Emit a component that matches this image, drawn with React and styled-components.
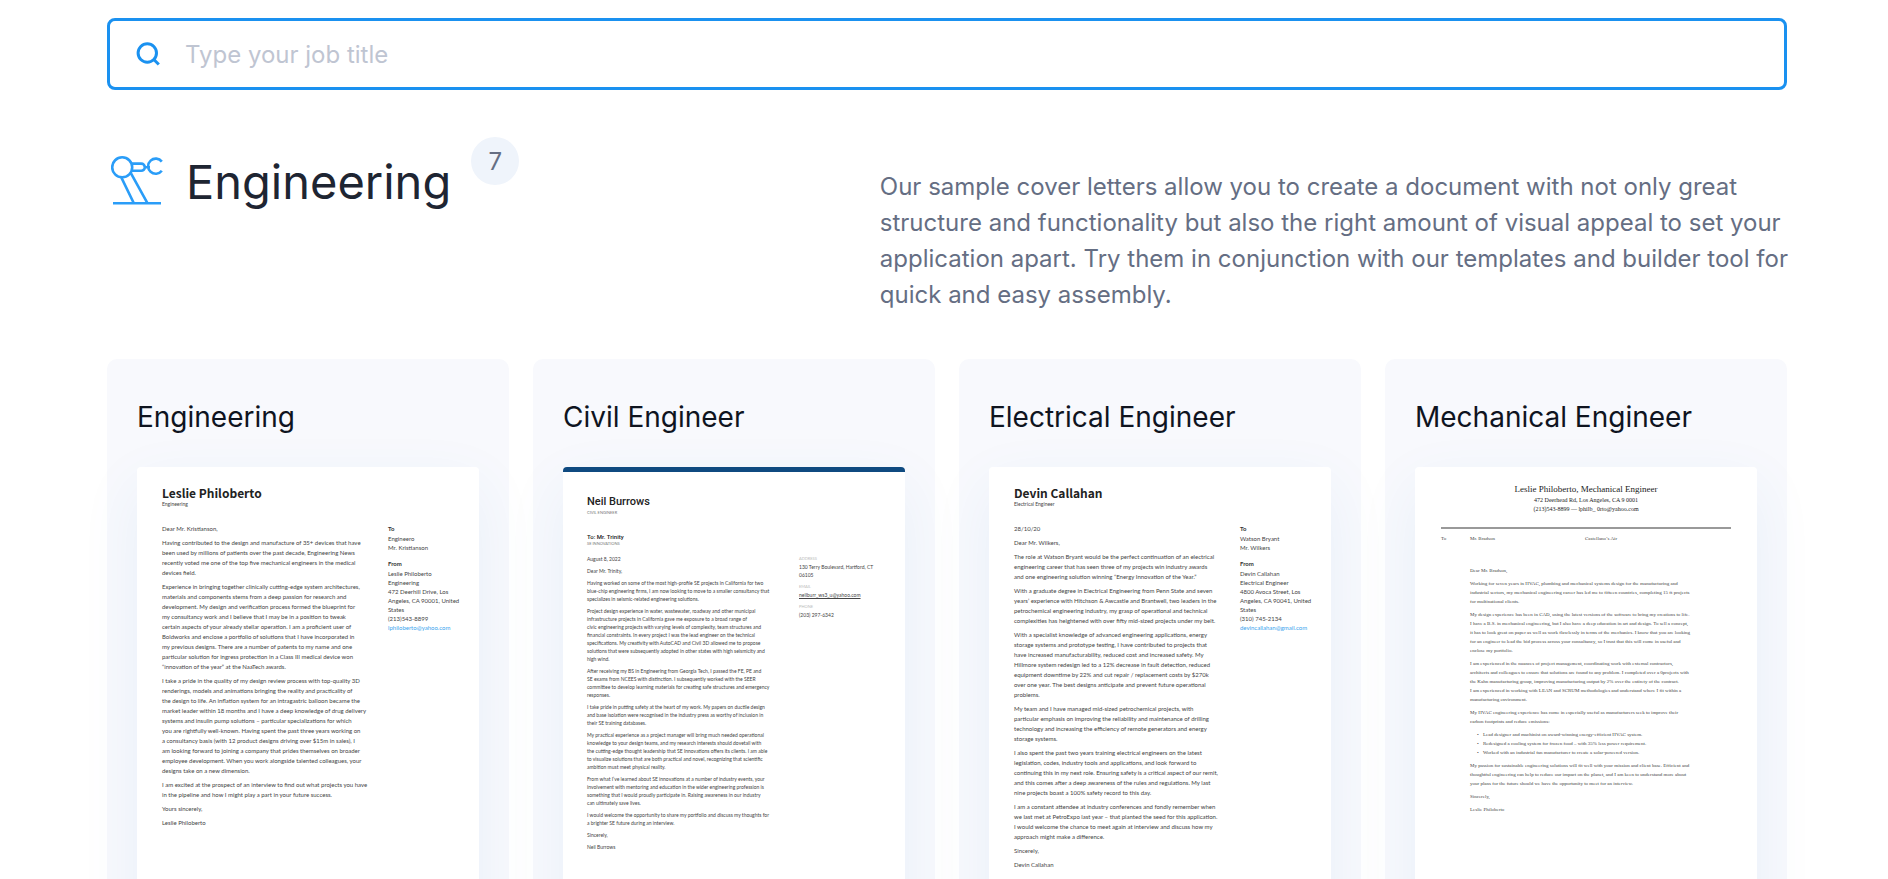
import React from 'react';
import styled, { createGlobalStyle, css } from 'styled-components';

const GlobalStyle = createGlobalStyle`
  *, *::before, *::after { box-sizing: border-box; }
  html { scrollbar-width: none; }
  body {
    margin: 0;
    background: #fff;
    color: #1e2532;
    font-family: Inter, "Liberation Sans", sans-serif;
  }
  h1, h2, h3, p, ul, address { margin: 0; padding: 0; font-weight: 400; font-style: normal; }
  a { color: inherit; text-decoration: none; }
`;

const Page = styled.main`
  padding: 18px 101px 0 107px;
  overflow: hidden;
`;

const SearchBox = styled.label`
  display: flex;
  align-items: center;
  gap: 23px;
  height: 72px;
  padding: 0 26px;
  border: 3px solid #1a91f0;
  border-radius: 8px;
`;

const SearchInput = styled.input`
  flex: 1;
  min-width: 0;
  padding: 2px 0 0;
  border: 0;
  outline: 0;
  background: transparent;
  color: #1e2532;
  font: 400 24px/36px Inter, "Liberation Sans", sans-serif;
  &::placeholder { color: #bfc5d2; opacity: 1; }
`;

const CategoryHeader = styled.header`
  display: flex;
  justify-content: space-between;
  align-items: flex-start;
  margin: 47px 0 46px;
`;

const CategoryTitle = styled.div`
  display: flex;
  align-items: flex-start;
  padding-left: 4px;
`;

const ArmIcon = styled.svg`
  margin-top: 18px;
  flex: none;
`;

const Heading = styled.h1`
  margin: 15px 20px 0 23px;
  font-size: 47px;
  line-height: 60px;
`;

const CountBadge = styled.span`
  width: 48px;
  height: 48px;
  border-radius: 50%;
  background: #eff4fb;
  color: #656e83;
  font-size: 24px;
  line-height: 50px;
  text-align: center;
`;

const Intro = styled.p`
  width: 54%;
  padding-top: 32px;
  color: #656e83;
  font-size: 24px;
  line-height: 36px;
  white-space: pre;
`;

const CardGrid = styled.section`
  display: grid;
  grid-template-columns: repeat(4, minmax(0, 1fr));
  gap: 24px;
`;

const Card = styled.article`
  padding: 40px 30px;
  border-radius: 10px;
  background: #f8f9fd;
`;

const CardTitle = styled.h2`
  margin-bottom: 32px;
  color: #0f141f;
  font-size: 28px;
  line-height: 36px;
`;

const faces = {
  humanist: css`font-family: Lato, sans-serif; font-size: 6px; line-height: 10px;`,
  compact: css`font-family: Lato, sans-serif; font-size: 5px; line-height: 8px;`,
  serif: css`font-family: "Liberation Serif", serif; font-size: 5px; line-height: 9px;`,
};

const Sheet = styled.div`
  aspect-ratio: 342 / 484;
  border-radius: 4px;
  background: #fff;
  color: #444;
  white-space: pre;
  box-shadow: 0 20px 60px rgba(48, 130, 196, 0.08);
  ${(p) => faces[p.$face]}
`;

const PlainSheet = styled(Sheet)`
  padding: 18px 25px;
`;

const BarSheet = styled(Sheet)`
  padding: 22px 24px;
  border-top: 5px solid #0f4a80;
`;

const SerifSheet = styled(Sheet)`
  padding: 15px 26px;
`;

const PlainName = styled.h3`
  color: #222;
  font-family: "Noto Sans CJK SC", Lato, sans-serif;
  font-size: 12px;
  font-weight: 700;
  line-height: 16px;
`;

const PlainRole = styled.p`
  margin-bottom: 17px;
  font-size: 5px;
  line-height: 6px;
`;

const NarrowName = styled.h3`
  color: #222;
  font-family: Roboto, sans-serif;
  font-size: ${(p) => (p.$small ? 6 : 11)}px;
  font-weight: 500;
  line-height: ${(p) => (p.$small ? 8 : 16)}px;
`;

const CapsLine = styled.p`
  margin-bottom: ${(p) => p.$after}px;
  color: #777;
  font-size: 4px;
  line-height: 6px;
`;

const Columns = styled.div`
  display: grid;
  grid-template-columns: ${(p) => p.$left} 1fr;
`;

const Paragraphs = styled.div`
  display: flex;
  flex-direction: column;
  gap: 4px;
`;

const Contacts = styled.address`
  display: flex;
  flex-direction: column;
  gap: ${(p) => p.$gap}px;
  line-height: ${(p) => p.$line}px;
`;

const ContactHeading = styled.p`
  margin-bottom: 1px;
  color: #333;
  font-weight: 700;
`;

const ContactLabel = styled.p`
  color: #bbb;
  font-size: 4px;
`;

const MailLink = styled.a`
  color: ${(p) => (p.$plain ? '#444' : '#3aa5ee')};
  text-decoration: ${(p) => (p.$plain ? 'underline' : 'none')};
`;

const Letterhead = styled.div`
  padding-bottom: 13px;
  border-bottom: 2px solid #999;
  color: #222;
  font-size: 6px;
  text-align: center;
`;

const SerifName = styled.h3`
  font-size: 9px;
  line-height: 14px;
`;

const Recipient = styled.div`
  display: grid;
  grid-template-columns: 29px 115px 1fr;
  padding: 5px 0 23px;
`;

const SerifBody = styled(Paragraphs)`
  padding-left: 29px;
`;

const Bullets = styled.ul`
  padding-left: 13px;
  list-style: none;
  li::before {
    content: "•";
    display: inline-block;
    width: 6px;
    margin-left: -6px;
  }
`;

const engineeringLetter = [
  'Dear Mr. Kristianson,',
  `Having contributed to the design and manufacture of 35+ devices that have
been used by millions of patients over the past decade, Engineering News
recently voted me one of the top five mechanical engineers in the medical
devices field.`,
  `Experience in bringing together clinically cutting-edge system architectures,
materials and components stems from a deep passion for research and
development. My design and verification process formed the blueprint for
my consultancy work and I believe that I may be in a position to tweak
certain aspects of your already stellar operation. I am a proficient user of
Boldworks and enclose a portfolio of solutions that I have incorporated in
my previous designs. There are a number of patents to my name and one
particular solution for ingress protection in a Class III medical device won
“innovation of the year” at the NaaTech awards.`,
  `I take a pride in the quality of my design review process with top-quality 3D
renderings, models and animations bringing the reality and practicality of
the design to life. An inflation system for an intragastric balloon became the
market leader within 18 months and I have a deep knowledge of drug delivery
systems and insulin pump solutions – particular specializations for which
you are rightfully well-known. Having spent the past three years working on
a consultancy basis (with 12 product designs driving over $15m in sales), I
am looking forward to joining a company that prides themselves on broader
employee development. When you work alongside talented colleagues, your
designs take on a new dimension.`,
  `I am excited at the prospect of an interview to find out what projects you have
in the pipeline and how I might play a part in your future success.`,
  'Yours sincerely,',
  'Leslie Philoberto',
];

const civilLetter = [
  'August 8, 2022',
  'Dear Mr. Trinity,',
  `Having worked on some of the most high-profile SE projects in California for two
blue-chip engineering firms, I am now looking to move to a smaller consultancy that
specializes in seismic-related engineering solutions.`,
  `Project design experience in water, wastewater, roadway and other municipal
infrastructure projects in California gave me exposure to a broad range of
civic engineering projects with varying levels of complexity, team structures and
financial constraints. In every project I was the lead engineer on the technical
specifications. My creativity with AutoCAD and Civil 3D allowed me to propose
solutions that were subsequently adopted in other states with high seismicity and
high wind.`,
  `After receiving my BS in Engineering from Georgia Tech, I passed the FE, PE and
SE exams from NCEES with distinction. I subsequently worked with the SEER
committee to develop learning materials for creating safe structures and emergency
responses.`,
  `I take pride in putting safety at the heart of my work. My papers on ductile design
and base isolation were recognised in the industry press as worthy of inclusion in
their SE training databases.`,
  `My practical experience as a project manager will bring much needed operational
knowledge to your design teams, and my research interests should dovetail with
the cutting-edge thought leadership that SE Innovations offers its clients. I am able
to visualize solutions that are both practical and novel, recognizing that scientific
ambition must meet physical reality.`,
  `From what I’ve learned about SE innovations at a number of industry events, your
involvement with mentoring and education in the wider engineering profession is
something that I would proudly participate in. Raising awareness in our industry
can ultimately save lives.`,
  `I would welcome the opportunity to share my portfolio and discuss my thoughts for
a brighter SE future during an interview.`,
  'Sincerely,',
  'Neil Burrows',
];

const electricalLetter = [
  '28/10/20',
  'Dear Mr. Wilkers,',
  `The role at Watson Bryant would be the perfect continuation of an electrical
engineering career that has seen three of my projects win industry awards
and one engineering solution winning “Energy Innovation of the Year.”`,
  `With a graduate degree in Electrical Engineering from Penn State and seven
years’ experience with Hitchson & Awcastle and Brantwell, two leaders in the
petrochemical engineering industry, my grasp of operational and technical
complexities has heightened with over fifty mid-sized projects under my belt.`,
  `With a specialist knowledge of advanced engineering applications, energy
storage systems and prototype testing, I have contributed to projects that
have increased manufacturability, reduced cost and increased safety. My
Hillmore system redesign led to a 12% decrease in fault detection, reduced
equipment downtime by 22% and cut repair / replacement costs by $270k
over one year. The best designs anticipate and prevent future operational
problems.`,
  `My team and I have managed mid-sized petrochemical projects, with
particular emphasis on improving the reliability and maintenance of drilling
technology and increasing the efficiency of remote generators and energy
storage systems.`,
  `I also spent the past two years training electrical engineers on the latest
legislation, codes, industry tools and applications, and look forward to
continuing this in my next role. Ensuring safety is a critical aspect of our remit,
and this comes after a deep awareness of the rules and regulations. My last
nine projects boast a 100% safety record to this day.`,
  `I am a constant attendee at industry conferences and fondly remember when
we last met at PetroExpo last year – that planted the seed for this application.
I would welcome the chance to meet again at interview and discuss how my
approach might make a difference.`,
  'Sincerely,',
  'Devin Callahan',
];

const mechanicalOpening = [
  'Dear Mr. Bradson,',
  `Working for seven years in HVAC, plumbing and mechanical systems design for the manufacturing and
industrial sectors, my mechanical engineering career has led me to fifteen countries, completing 15 ft projects
for multinational clients.`,
  `My design experience has been in CAD, using the latest versions of the software to bring my creations to life.
I have a B.S. in mechanical engineering, but I also have a deep education in art and design. To sell a concept,
it has to look great on paper as well as work flawlessly in terms of the mechanics. I know that you are looking
for an engineer to lead the bid process across your consultancy, so I trust that this will come in useful and
enclose my portfolio.`,
  `I am experienced in the nuances of project management, coordinating work with external contractors,
architects and colleagues to ensure that solutions are found to any problem. I completed over a 0projects with
the Kahn manufacturing group, improving manufacturing output by 2% over the entirety of the contract.
I am experienced in working with LEAN and SCRUM methodologies and understand where I fit within a
manufacturing environment.`,
  `My HVAC engineering experience has come in especially useful as manufacturers seek to improve their
carbon footprints and reduce emissions:`,
];

const mechanicalPoints = [
  'Lead designer and machinist on award-winning energy-efficient HVAC system.',
  'Redesigned a cooling system for frozen food – with 35% less power requirement.',
  'Worked with an industrial fan manufacturer to create a solar-powered version.',
];

const mechanicalClosing = [
  `My passion for sustainable engineering solutions will fit well with your mission and client base. Efficient and
thoughtful engineering can help to reduce our impact on the planet, and I am keen to understand more about
your plans for the future should we have the opportunity to meet for an interview.`,
  'Sincerely,',
  'Leslie Philoberto',
];

const renderText = (items) => items.map((text) => <p key={text}>{text}</p>);

function PlainLetter({ name, role, letter, to, from, email }) {
  return (
    <PlainSheet $face="humanist">
      <PlainName>{name}</PlainName>
      <PlainRole>{role}</PlainRole>
      <Columns $left="226px">
        <Paragraphs>{renderText(letter)}</Paragraphs>
        <Contacts $gap={7} $line={9}>
          <div>
            <ContactHeading>To</ContactHeading>
            <p>{to}</p>
          </div>
          <div>
            <ContactHeading>From</ContactHeading>
            <p>{from}</p>
            <MailLink href={`mailto:${email}`}>{email}</MailLink>
          </div>
        </Contacts>
      </Columns>
    </PlainSheet>
  );
}

function CivilLetter() {
  return (
    <BarSheet $face="compact">
      <NarrowName>Neil Burrows</NarrowName>
      <CapsLine $after={17}>CIVIL ENGINEER</CapsLine>
      <NarrowName as="p" $small>To: Mr. Trinity</NarrowName>
      <CapsLine $after={8}>SE INNOVATIONS</CapsLine>
      <Columns $left="212px">
        <Paragraphs>{renderText(civilLetter)}</Paragraphs>
        <Contacts $gap={4} $line={8}>
          <div>
            <ContactLabel>ADDRESS</ContactLabel>
            <p>{'130 Terry Boulevard, Hartford, CT\n06105'}</p>
          </div>
          <div>
            <ContactLabel>EMAIL</ContactLabel>
            <MailLink $plain href="mailto:neilburr_ws3_u@yahoo.com">neilburr_ws3_u@yahoo.com</MailLink>
          </div>
          <div>
            <ContactLabel>PHONE</ContactLabel>
            <p>(203) 297-6342</p>
          </div>
        </Contacts>
      </Columns>
    </BarSheet>
  );
}

function MechanicalLetter() {
  return (
    <SerifSheet $face="serif">
      <Letterhead>
        <SerifName>Leslie Philoberto, Mechanical Engineer</SerifName>
        <p>472 Deerhead Rd, Los Angeles, CA 9 0001</p>
        <p>(213)543-8899 — lphilb_ 0rto@yahoo.com</p>
      </Letterhead>
      <Recipient>
        <span>To</span>
        <span>Mr. Bradson</span>
        <span>Castellano’s Air</span>
      </Recipient>
      <SerifBody>
        {renderText(mechanicalOpening)}
        <Bullets>
          {mechanicalPoints.map((point) => <li key={point}>{point}</li>)}
        </Bullets>
        {renderText(mechanicalClosing)}
      </SerifBody>
    </SerifSheet>
  );
}

function SampleCard({ title, children }) {
  return (
    <Card>
      <CardTitle><a href="#sample">{title}</a></CardTitle>
      {children}
    </Card>
  );
}

export default function App() {
  return (
    <>
      <GlobalStyle />
      <Page>
        <SearchBox>
          <svg width="26" height="26" viewBox="0 0 26 26" fill="none" stroke="#1a91f0" strokeWidth="3" aria-hidden="true">
            <circle cx="11.3" cy="12" r="9.2" />
            <path d="M17.3 18l5.5 5.5" />
          </svg>
          <SearchInput type="text" placeholder="Type your job title" aria-label="Type your job title" />
        </SearchBox>

        <CategoryHeader>
          <CategoryTitle>
            <ArmIcon width="52" height="52" viewBox="0 0 52 52" fill="none" stroke="#2a9df8" strokeWidth="2.6" aria-hidden="true">
              <circle cx="11.2" cy="12.3" r="10" />
              <path d="M21 8.6h9.2a3.6 3.6 0 0 1 0 7.2H21M34 12.2h5" />
              <path d="M50.8 6.6A7.6 7.6 0 1 0 50.8 15.8" />
              <path d="M10.4 22.6l12.2 25.2M20 18.4l16.3 29.4M2 48.2h48" />
            </ArmIcon>
            <Heading>Engineering</Heading>
            <CountBadge>7</CountBadge>
          </CategoryTitle>
          <Intro>
            {`Our sample cover letters allow you to create a document with not only great
structure and functionality but also the right amount of visual appeal to set your
application apart. Try them in conjunction with our templates and builder tool for
quick and easy assembly.`}
          </Intro>
        </CategoryHeader>

        <CardGrid>
          <SampleCard title="Engineering">
            <PlainLetter
              name="Leslie Philoberto"
              role="Engineering"
              letter={engineeringLetter}
              to={'Engineero\nMr. Kristianson'}
              from={'Leslie Philoberto\nEngineering\n472 Deerhill Drive, Los\nAngeles, CA 90001, United\nStates\n(213)543-8899'}
              email="lphiloberto@yahoo.com"
            />
          </SampleCard>
          <SampleCard title="Civil Engineer">
            <CivilLetter />
          </SampleCard>
          <SampleCard title="Electrical Engineer">
            <PlainLetter
              name="Devin Callahan"
              role="Electrical Engineer"
              letter={electricalLetter}
              to={'Watson Bryant\nMr. Wilkers'}
              from={'Devin Callahan\nElectrical Engineer\n4800 Avoca Street, Los\nAngeles, CA 90041, United\nStates\n(310) 745-2134'}
              email="devincallahan@gmail.com"
            />
          </SampleCard>
          <SampleCard title="Mechanical Engineer">
            <MechanicalLetter />
          </SampleCard>
        </CardGrid>
      </Page>
    </>
  );
}
